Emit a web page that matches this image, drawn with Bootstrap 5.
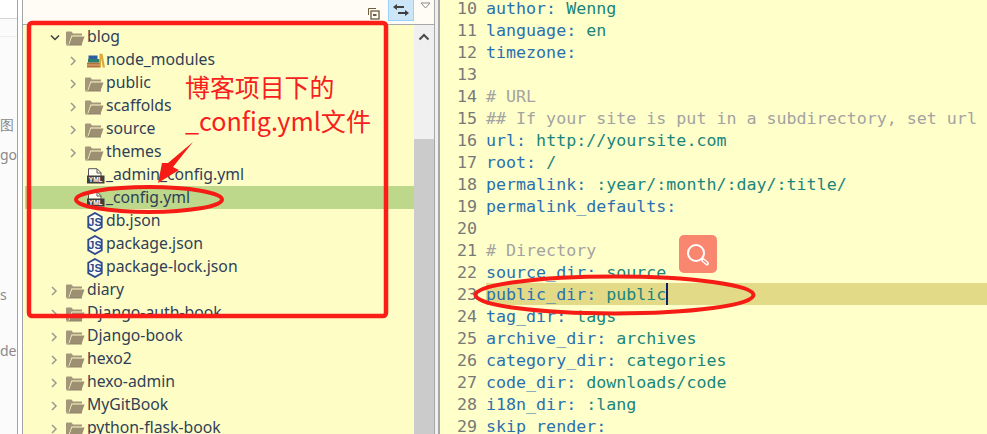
<!DOCTYPE html>
<html lang="zh"><head><meta charset="utf-8"><title>Eclipse</title>
<link rel="stylesheet" href="https://cdn.jsdelivr.net/npm/bootstrap@5.3.0/dist/css/bootstrap.min.css">
<style>
html,body{width:987px;height:434px;overflow:hidden;background:#fff}
.shot{width:987px;height:434px;overflow:hidden;position:relative;font-family:"Noto Sans","Liberation Sans",sans-serif}
.stub{width:23px;flex:none;background:#fff;border-right:1px solid #a5a5a5}
.stub-in{width:18px;height:100%;background:#fbfbfb;border-right:1px solid #ee8a5c;overflow:hidden;font-size:14px;color:#8a8a8a;line-height:20px;white-space:nowrap}
.stub-head{height:19px;background:#fff;border-bottom:1px solid #d5d5d5}
.stub-line{height:18px;border-bottom:1px solid #efefef}
.stub-txt{width:17px;overflow:hidden}
.gap105{height:78px}.gap20{height:10px}.gap120{height:120px}.gap36{height:36px}
.side{width:391px;flex:none;background:#fefdc6;overflow:hidden}
.tool{height:25px;flex:none;background:#fffcf5;border-bottom:1px solid #a8a8a8}
.toolbtn{width:26px;height:21px;background:#cde6f7;border:1px solid #99d1ff;border-top:0}
.tree{color:#2f3f57;font-size:15.75px}
.trow{height:23px;line-height:23px;white-space:nowrap}
.trow.sel{background:#bdd78b;margin-left:2px;padding-left:42px}
.d0{padding-left:25px}.d1{padding-left:44px}
.slot{width:18px;flex:none;padding-left:1px}.islot{width:21px;flex:none;margin-left:-1px;margin-right:1px}
.fslot{padding-left:3px}
.vbar{width:20px;flex:none;background:#f0f0f0}
.vtop{height:25px;background:#fffcf5;border-bottom:1px solid #a8a8a8}
.thumb{background:#cbcbcb;height:295px}
.arrow-up{height:114px}
.sash{width:6px;flex:none;background:#f0f0f0;border-left:1px solid #a8a8a8;border-right:2px solid #a8a8a8}
.editor{flex:1;background:#ffffc9;font-family:"DejaVu Sans Mono","Liberation Mono",monospace;font-size:16.65px;line-height:22px;overflow:hidden}
.lines{margin-top:-3px}
.ln{height:22px;white-space:pre}
.num{display:inline-block;vertical-align:top;padding-top:1px;height:22px;width:37px;text-align:right;color:#787878}
.txt{display:inline-block;vertical-align:top;padding-top:1px;height:22px;margin-left:9px}
.curwrap .txt{width:501px;background:#e2da87}
.k{color:#2a70b0}.v{color:#19857c}.c{color:#a3a3a3}
.caret{display:inline-block;width:2px;height:22px;margin-top:-1px;background:#10206a;vertical-align:top}
.marks{position:absolute;left:0;top:0;width:987px;height:434px;pointer-events:none}
.note{position:absolute;left:185px;color:#f6201c;font-family:"Noto Sans CJK SC","Noto Sans",sans-serif;line-height:34px;white-space:nowrap}
.n1{top:69px;font-size:24.9px}.n2{top:103px;font-size:25.1px}
.searchbtn{position:absolute;left:679px;top:235px;width:38px;height:38px;border-radius:5px;background:#f9866e}
</style></head><body>
<svg width="0" height="0" class="position-absolute">
<defs>
<symbol id="folder" viewBox="0 0 20 16"><path d="M1 14.5V2.5q0-1 1-1h4.5l1.5 2h9v2H6.5L3.5 14.5z" fill="#a3967a"/><path d="M4 15L7 6.500h12.500L16.500 15z" fill="#9c8f72"/><path d="M1.500 15H17" stroke="#8d8168" stroke-width="1"/></symbol>
<symbol id="chevr" viewBox="0 0 10 12"><path d="M3 2l4 4-4 4" fill="none" stroke="#9a9a92" stroke-width="1.500"/></symbol>
<symbol id="chevd" viewBox="0 0 12 10"><path d="M2 2.500l4 4 4-4" fill="none" stroke="#3c3c3c" stroke-width="1.500"/></symbol>
<symbol id="yml" viewBox="0 0 18 16"><path d="M1.500 8V.7h8.500l4 4V8" fill="#fffef0" stroke="#555" stroke-width="1"/><path d="M10 1v4h4" fill="none" stroke="#555"/><rect x="0" y="7.500" width="17.500" height="8" fill="#3f3f3f"/><text x="8.700" y="14" font-size="6.500" font-weight="700" text-anchor="middle" fill="#fff" font-family="Liberation Sans,sans-serif">YML</text></symbol>
<symbol id="js" viewBox="0 0 16 20"><path d="M8 1l6.700 3.700v10.600L8 19l-6.700-3.700V4.700z" fill="#fdfdf4" stroke="#2e4a8e" stroke-width="1.900"/><text x="8" y="14.300" font-size="11" font-weight="700" text-anchor="middle" fill="#2e4a8e" font-family="Liberation Sans,sans-serif">JS</text></symbol>
<symbol id="books" viewBox="0 0 18 15"><rect x="0" y="9.500" width="13" height="5" fill="#b5703a"/><path d="M0 12h13" stroke="#e8c090" stroke-width=".8"/><rect x="1" y="6" width="11.500" height="3.500" fill="#2b7e6e"/><rect x="1.500" y="2.500" width="9" height="3.500" fill="#2b5f9e"/><path d="M12.500.8h3L18 14.500h-2.300L14.300 5 14 14.500h-1.500z" fill="#d9a93a"/></symbol>
</defs></svg>
<div class="shot d-flex">
  <div class="stub">
    <div class="stub-in">
      <div class="stub-head"></div><div class="stub-line"></div>
      <div class="gap105"></div>
      <div class="stub-txt">图</div>
      <div class="gap20"></div>
      <div class="stub-txt">go</div>
      <div class="gap120"></div>
      <div class="stub-txt">s</div>
      <div class="gap36"></div>
      <div class="stub-txt">ded</div>
    </div>
  </div>
  <div class="side d-flex flex-column">
    <div class="tool d-flex justify-content-end align-items-start gap-2">
      <svg class="mt-2" width="12" height="12" viewBox="0 0 12 12"><path d="M.5 7V.5H8" fill="none" stroke="#6a5d3a"/><rect x="3" y="3" width="8" height="8" fill="none" stroke="#6a5d3a" stroke-width="1.300"/><rect x="5" y="6" width="3.500" height="2" fill="#6a5d3a"/></svg>
      <div class="toolbtn d-flex align-items-center justify-content-center">
        <svg width="16" height="12" viewBox="0 0 16 12"><path d="M0 3l4-3v2h7v2H4v2zM16 9l-4-3v2H5v2h7v2z" fill="#3f3f3f"/></svg>
      </div>
    </div>
    <div class="tree">
      <div class="trow d-flex align-items-center d0"><span class="slot"><svg width="12" height="10"><use href="#chevd"/></svg></span><span class="islot"><svg width="20" height="16"><use href="#folder"/></svg></span>blog</div>
      <div class="trow d-flex align-items-center d1"><span class="slot"><svg width="10" height="12"><use href="#chevr"/></svg></span><span class="islot fslot"><svg width="18" height="15"><use href="#books"/></svg></span>node_modules</div>
      <div class="trow d-flex align-items-center d1"><span class="slot"><svg width="10" height="12"><use href="#chevr"/></svg></span><span class="islot"><svg width="20" height="16"><use href="#folder"/></svg></span>public</div>
      <div class="trow d-flex align-items-center d1"><span class="slot"><svg width="10" height="12"><use href="#chevr"/></svg></span><span class="islot"><svg width="20" height="16"><use href="#folder"/></svg></span>scaffolds</div>
      <div class="trow d-flex align-items-center d1"><span class="slot"><svg width="10" height="12"><use href="#chevr"/></svg></span><span class="islot"><svg width="20" height="16"><use href="#folder"/></svg></span>source</div>
      <div class="trow d-flex align-items-center d1"><span class="slot"><svg width="10" height="12"><use href="#chevr"/></svg></span><span class="islot"><svg width="20" height="16"><use href="#folder"/></svg></span>themes</div>
      <div class="trow d-flex align-items-center d1"><span class="slot"></span><span class="islot fslot"><svg width="18" height="16"><use href="#yml"/></svg></span>_admin_config.yml</div>
      <div class="trow sel d-flex align-items-center d1"><span class="slot"></span><span class="islot fslot"><svg width="18" height="16"><use href="#yml"/></svg></span>_config.yml</div>
      <div class="trow d-flex align-items-center d1"><span class="slot"></span><span class="islot fslot"><svg width="16" height="20"><use href="#js"/></svg></span>db.json</div>
      <div class="trow d-flex align-items-center d1"><span class="slot"></span><span class="islot fslot"><svg width="16" height="20"><use href="#js"/></svg></span>package.json</div>
      <div class="trow d-flex align-items-center d1"><span class="slot"></span><span class="islot fslot"><svg width="16" height="20"><use href="#js"/></svg></span>package-lock.json</div>
      <div class="trow d-flex align-items-center d0"><span class="slot"><svg width="10" height="12"><use href="#chevr"/></svg></span><span class="islot"><svg width="20" height="16"><use href="#folder"/></svg></span>diary</div>
      <div class="trow d-flex align-items-center d0"><span class="slot"><svg width="10" height="12"><use href="#chevr"/></svg></span><span class="islot"><svg width="20" height="16"><use href="#folder"/></svg></span>Django-auth-book</div>
      <div class="trow d-flex align-items-center d0"><span class="slot"><svg width="10" height="12"><use href="#chevr"/></svg></span><span class="islot"><svg width="20" height="16"><use href="#folder"/></svg></span>Django-book</div>
      <div class="trow d-flex align-items-center d0"><span class="slot"><svg width="10" height="12"><use href="#chevr"/></svg></span><span class="islot"><svg width="20" height="16"><use href="#folder"/></svg></span>hexo2</div>
      <div class="trow d-flex align-items-center d0"><span class="slot"><svg width="10" height="12"><use href="#chevr"/></svg></span><span class="islot"><svg width="20" height="16"><use href="#folder"/></svg></span>hexo-admin</div>
      <div class="trow d-flex align-items-center d0"><span class="slot"><svg width="10" height="12"><use href="#chevr"/></svg></span><span class="islot"><svg width="20" height="16"><use href="#folder"/></svg></span>MyGitBook</div>
      <div class="trow d-flex align-items-center d0"><span class="slot"><svg width="10" height="12"><use href="#chevr"/></svg></span><span class="islot"><svg width="20" height="16"><use href="#folder"/></svg></span>python-flask-book</div>
    </div>
  </div>
  <div class="vbar">
    <div class="vtop"></div>
    <div class="arrow-up d-flex justify-content-center pt-2"><svg width="12" height="8" viewBox="0 0 12 8"><path d="M1.500 6.500L6 2l4.500 4.500" fill="none" stroke="#4a4a4a" stroke-width="2"/></svg></div>
    <div class="thumb"></div>
  </div>
  <div class="sash"></div>
  <div class="editor">
    <div class="lines">
<div class="ln"><span class="num">10</span><span class="txt"><span class="k">author:</span> <span class="v">Wenng</span></span></div>
<div class="ln"><span class="num">11</span><span class="txt"><span class="k">language:</span> <span class="v">en</span></span></div>
<div class="ln"><span class="num">12</span><span class="txt"><span class="k">timezone:</span></span></div>
<div class="ln"><span class="num">13</span><span class="txt"></span></div>
<div class="ln"><span class="num">14</span><span class="txt"><span class="c"># URL</span></span></div>
<div class="ln"><span class="num">15</span><span class="txt"><span class="c">## If your site is put in a subdirectory, set url</span></span></div>
<div class="ln"><span class="num">16</span><span class="txt"><span class="k">url:</span> <span class="v">http://yoursite.com</span></span></div>
<div class="ln"><span class="num">17</span><span class="txt"><span class="k">root:</span> <span class="v">/</span></span></div>
<div class="ln"><span class="num">18</span><span class="txt"><span class="k">permalink:</span> <span class="v">:year/:month/:day/:title/</span></span></div>
<div class="ln"><span class="num">19</span><span class="txt"><span class="k">permalink_defaults:</span></span></div>
<div class="ln"><span class="num">20</span><span class="txt"></span></div>
<div class="ln"><span class="num">21</span><span class="txt"><span class="c"># Directory</span></span></div>
<div class="ln"><span class="num">22</span><span class="txt"><span class="k">source_dir:</span> <span class="v">source</span></span></div>
<div class="ln curwrap"><span class="num">23</span><span class="txt"><span class="k">public_dir:</span> <span class="v">public</span><span class="caret"></span></span></div>
<div class="ln"><span class="num">24</span><span class="txt"><span class="k">tag_dir:</span> <span class="v">tags</span></span></div>
<div class="ln"><span class="num">25</span><span class="txt"><span class="k">archive_dir:</span> <span class="v">archives</span></span></div>
<div class="ln"><span class="num">26</span><span class="txt"><span class="k">category_dir:</span> <span class="v">categories</span></span></div>
<div class="ln"><span class="num">27</span><span class="txt"><span class="k">code_dir:</span> <span class="v">downloads/code</span></span></div>
<div class="ln"><span class="num">28</span><span class="txt"><span class="k">i18n_dir:</span> <span class="v">:lang</span></span></div>
<div class="ln"><span class="num">29</span><span class="txt"><span class="k">skip_render:</span></span></div>
    </div>
  </div>
  <svg class="marks" viewBox="0 0 987 434">
    <path d="M421 3h9l-4.500 5z" fill="#fffcf5" stroke="#8a8a8a"/>
    <rect x="29" y="23" width="357" height="293" rx="3" fill="none" stroke="#fb1d17" stroke-width="4.500"/>
    <ellipse cx="149" cy="199.500" rx="73" ry="12.500" fill="none" stroke="#f51c16" stroke-width="4"/>
    <ellipse cx="614.500" cy="295" rx="139" ry="18.500" fill="none" stroke="#f51c16" stroke-width="4"/>
    <path d="M193 142L168 163l-6 0-4 20 21-13-6-3z" fill="#f51c16"/>
  </svg>
  <div class="note n1">博客项目下的</div>
  <div class="note n2">_config.yml文件</div>
  <div class="searchbtn d-flex align-items-center justify-content-center">
    <svg width="26" height="26" viewBox="0 0 26 26"><circle cx="11" cy="12" r="8" fill="none" stroke="#fff" stroke-width="2"/><path d="M18 19l4 3.500" stroke="#fff" stroke-width="4" stroke-linecap="round"/><path d="M18.500 19.500l3 2.500" stroke="#f9866e" stroke-width="1.500" stroke-linecap="round"/></svg>
  </div>
</div>
<script src="https://cdn.jsdelivr.net/npm/bootstrap@5.3.0/dist/js/bootstrap.bundle.min.js"></script>
</body></html>
